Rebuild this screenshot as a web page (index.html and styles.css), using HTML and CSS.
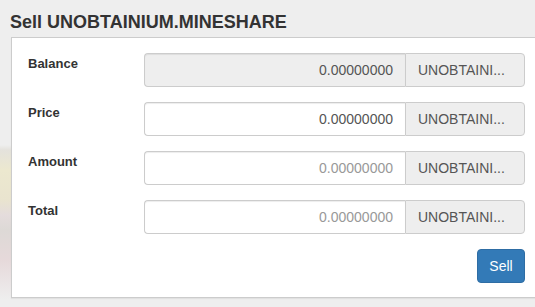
FILE: index.html
```html
<!DOCTYPE html>
<html>
<head>
<meta charset="utf-8">
<link rel="stylesheet" href="styles.css">
</head>
<body>
<div class="page">
  <h3 class="title">Sell UNOBTAINIUM.MINESHARE</h3>
  <div class="panel">
    <div class="row">
      <label class="label">Balance</label>
      <div class="group">
        <div class="field disabled">0.00000000</div>
        <div class="addon" title="UNOBTAINIUM.MINESHARE">UNOBTAINI...</div>
      </div>
    </div>
    <div class="row">
      <label class="label">Price</label>
      <div class="group">
        <div class="field">0.00000000</div>
        <div class="addon" title="UNOBTAINIUM.MINESHARE">UNOBTAINI...</div>
      </div>
    </div>
    <div class="row">
      <label class="label">Amount</label>
      <div class="group">
        <div class="field placeholder">0.00000000</div>
        <div class="addon" title="UNOBTAINIUM.MINESHARE">UNOBTAINI...</div>
      </div>
    </div>
    <div class="row">
      <label class="label">Total</label>
      <div class="group">
        <div class="field placeholder">0.00000000</div>
        <div class="addon" title="UNOBTAINIUM.MINESHARE">UNOBTAINI...</div>
      </div>
    </div>
    <div class="actions">
      <button class="btn">Sell</button>
    </div>
  </div>
</div>
</body>
</html>
```

FILE: styles.css
```css
html, body {
  margin: 0;
  padding: 0;
}
body {
  width: 535px;
  height: 307px;
  overflow: hidden;
  background-color: #eeeeee;
  background-image: linear-gradient(to bottom, #eeeeee 0, #eeeeee 145px, #e4e2dc 150px, #ece8cf 170px, #e9e4cf 200px, #e4dcdc 215px, #ddd9d6 230px, #e6d9da 260px, #eee 300px);
  background-size: 11px 100%;
  background-repeat: no-repeat;
  font-family: "Liberation Sans", Arial, sans-serif;
  color: #333333;
}
.page {
  padding-top: 13px;
}
.title {
  margin: 0 0 6px 10px;
  font-size: 18px;
  line-height: 18px;
  font-weight: bold;
  color: #333;
}
.panel {
  margin-left: 11px;
  width: 528px;
  background: #fff;
  border: 1px solid #cccccc;
  padding: 15px 15px 14px 15px;
  display: flex;
  flex-direction: column;
  gap: 15px;
  box-shadow: 0 1px 1px rgba(0,0,0,0.05);
}
.row {
  display: flex;
  align-items: flex-start;
  height: 34px;
}
.label {
  width: 117px;
  flex: none;
  font-size: 13px;
  font-weight: bold;
  line-height: 16px;
  padding-top: 3px;
  padding-left: 1px;
  box-sizing: border-box;
}
.group {
  display: flex;
  width: 381px;
  height: 34px;
}
.field {
  flex: 1;
  box-sizing: border-box;
  height: 34px;
  border: 1px solid #cccccc;
  border-right: none;
  border-radius: 4px 0 0 4px;
  padding: 0 12px;
  font-size: 14px;
  line-height: 32px;
  text-align: right;
  color: #555555;
  background: #fff;
  box-shadow: inset 0 1px 1px rgba(0,0,0,0.075);
}
.field.disabled {
  background: #eeeeee;
}
.field.placeholder {
  color: #999999;
}
.addon {
  width: 120px;
  flex: none;
  box-sizing: border-box;
  height: 34px;
  border: 1px solid #cccccc;
  border-radius: 0 4px 4px 0;
  background: #eeeeee;
  padding: 0 12px;
  font-size: 14px;
  line-height: 32px;
  color: #555555;
  white-space: nowrap;
  overflow: hidden;
}
.actions {
  display: flex;
  justify-content: flex-end;
  width: 498px;
}
.btn {
  width: 48px;
  height: 34px;
  border: 1px solid #2e6da4;
  border-radius: 4px;
  background: #337ab7;
  color: #fff;
  font-family: "Liberation Sans", Arial, sans-serif;
  font-size: 14px;
  padding: 0;
}
```
